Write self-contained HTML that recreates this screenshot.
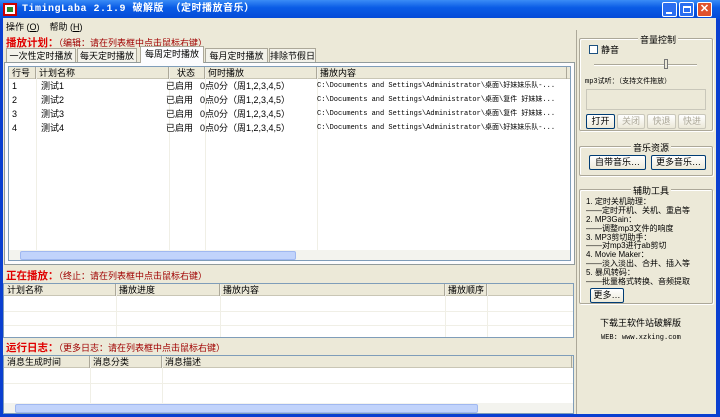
<!DOCTYPE html><html><head><meta charset="utf-8"><style>
*{margin:0;padding:0;box-sizing:border-box}
body{width:720px;height:417px;overflow:hidden;background:#0a3fd0;font-family:"Liberation Sans","Noto Sans CJK SC",sans-serif;font-size:9px;color:#000;position:relative}
.a{position:absolute}
.win{left:3px;top:18px;width:713px;height:396px;background:#ece9d8}
.title{left:0;top:0;width:720px;height:19px;background:linear-gradient(#3a8cf6,#0a5ce6 40%,#0449d6);color:#fff;font:bold 10px "Liberation Mono","Noto Sans CJK SC",monospace;line-height:19px;padding-left:22px;letter-spacing:0.5px}
.tb{top:2px;width:15px;height:15px;border:1px solid #fff;border-radius:2px;background:#2a6ef0}
.red{color:#e00000;font-weight:bold;font-size:10.5px}
.dred{color:#a00000;font-size:9px;font-weight:normal}
.list{background:#fff;border:1px solid #7f9db9}
.hdr{background:#ece9d8;height:12px;border-bottom:1px solid #c9c6b5;white-space:nowrap}
.hdr span{position:absolute;top:0;height:12px;border-right:1px solid #aca899;padding-left:3px;line-height:12px}
.row{position:absolute;height:14px;line-height:14px;white-space:nowrap}
.row span{position:absolute}
.mono{font-family:"Liberation Mono","Noto Sans CJK SC",monospace;font-size:7px}
.vl{position:absolute;top:0;bottom:0;width:1px;background:#f0efe6}
.grp{border:1px solid #aca899;border-radius:2px;box-shadow:inset 1px 1px #fff,1px 1px #fff}
.gt{background:#ece9d8;padding:0 2px;top:-6px;font-size:9px}
.btn{border:1px solid #003c74;border-radius:2px;background:linear-gradient(#fff,#ece9d8);text-align:center;line-height:13px;height:15px}
.dis{color:#aca899;border-color:#c9c7ba}
.hs{height:11px;background:#f3f3ee}
.tab{top:48px;height:14px;line-height:14px;border:1px solid #aca899;border-bottom:none;background:#f3f2ea;text-align:center}
.tl div{height:8.9px;line-height:8.9px;font-size:8px;white-space:nowrap}
</style></head><body>
<div class="a title">TimingLaba 2.1.9 破解版 （定时播放音乐）</div>
<div class="a" style="left:3px;top:3px;width:14px;height:13px;background:#fff;border:2px solid #c00"><div style="margin:2px;width:6px;height:5px;background:#2a8a2a"></div></div>
<div class="a tb" style="left:662px"><div style="position:absolute;left:3px;bottom:2px;width:6px;height:2px;background:#fff"></div></div>
<div class="a tb" style="left:679px"><div style="position:absolute;left:3px;top:3px;width:8px;height:7px;border:1px solid #fff;border-top-width:2px"></div></div>
<div class="a tb" style="left:697px;background:#e0522c;color:#fff;font-weight:bold;font-size:11px;text-align:center;line-height:13px">✕</div>
<div class="a win"></div>
<div class="a" style="left:6px;top:20px;font-size:9px">操作 (<u>O</u>)&nbsp;&nbsp;&nbsp;&nbsp;帮助 (<u>H</u>)</div>
<div class="a red" style="left:6px;top:35px">播放计划：<span class="dred">（编辑：请在列表框中点击鼠标右键）</span></div>
<div class="a tab" style="left:6px;width:70px">一次性定时播放</div>
<div class="a tab" style="left:77px;width:60px">每天定时播放</div>
<div class="a tab" style="left:140px;width:64px;top:46px;height:17px;background:#fcfcfe;z-index:2">每周定时播放</div>
<div class="a tab" style="left:205px;width:63px">每月定时播放</div>
<div class="a tab" style="left:269px;width:47px">排除节假日</div>
<div class="a" style="left:4px;top:62px;width:571px;height:203px;border:1px solid #919b9c;background:#fcfcfe"></div>
<div class="a list" style="left:8px;top:66px;width:563px;height:195px;overflow:hidden">
<div class="hdr a" style="left:0;top:0;width:563px">
<span style="left:0;width:27px">行号</span><span style="left:27px;width:133px">计划名称</span><span style="left:160px;width:36px;padding-left:8px">状态</span><span style="left:196px;width:112px">何时播放</span><span style="left:308px;width:250px">播放内容</span></div>
<div class="vl" style="left:27px"></div><div class="vl" style="left:160px"></div><div class="vl" style="left:196px"></div><div class="vl" style="left:308px"></div>
<div class="row" style="top:12px;width:563px"><span style="left:3px">1</span><span style="left:32px">测试1</span><span style="left:157px">已启用</span><span style="left:191px">0点0分（周1,2,3,4,5）</span><span class="mono" style="left:308px">C:\Documents and Settings\Administrator\桌面\好妹妹乐队-...</span></div>
<div class="row" style="top:26px;width:563px"><span style="left:3px">2</span><span style="left:32px">测试2</span><span style="left:157px">已启用</span><span style="left:191px">0点0分（周1,2,3,4,5）</span><span class="mono" style="left:308px">C:\Documents and Settings\Administrator\桌面\复件 好妹妹...</span></div>
<div class="row" style="top:40px;width:563px"><span style="left:3px">3</span><span style="left:32px">测试3</span><span style="left:157px">已启用</span><span style="left:191px">0点0分（周1,2,3,4,5）</span><span class="mono" style="left:308px">C:\Documents and Settings\Administrator\桌面\复件 好妹妹...</span></div>
<div class="row" style="top:54px;width:563px"><span style="left:3px">4</span><span style="left:32px">测试4</span><span style="left:157px">已启用</span><span style="left:191px">0点0分（周1,2,3,4,5）</span><span class="mono" style="left:308px">C:\Documents and Settings\Administrator\桌面\好妹妹乐队-...</span></div>
<div class="a hs" style="left:0;top:183px;width:563px"><div class="a" style="left:11px;top:1px;width:276px;height:9px;background:#c1d3fb;border:1px solid #a0b8f0;border-radius:2px"></div></div>
</div>
<div class="a" style="left:576px;top:30px;width:1px;height:384px;background:#aca899"></div>
<div class="a grp" style="left:579px;top:38px;width:134px;height:93px"><div class="a gt" style="left:58px">音量控制</div>
<div class="a" style="left:9px;top:6px;width:9px;height:9px;border:1px solid #1c5180;background:#fff"></div><div class="a" style="left:21px;top:4px">静音</div>
<div class="a" style="left:14px;top:25px;width:103px;height:2px;border-top:1px solid #aca899;border-bottom:1px solid #fff"></div>
<div class="a" style="left:84px;top:20px;width:4px;height:10px;background:#ece9d8;border:1px solid #777"></div>
<div class="a mono" style="left:5px;top:37px">mp3试听：（支持文件拖放）</div>
<div class="a" style="left:6px;top:50px;width:120px;height:21px;border:1px solid #c9c7ba;background:#ece9d8"></div>
<div class="a btn" style="left:6px;top:75px;width:29px;font-size:9px">打开</div>
<div class="a btn dis" style="left:37px;top:75px;width:28px">关闭</div>
<div class="a btn dis" style="left:67px;top:75px;width:29px">快退</div>
<div class="a btn dis" style="left:98px;top:75px;width:28px">快进</div></div>
<div class="a grp" style="left:579px;top:146px;width:134px;height:30px"><div class="a gt" style="left:51px">音乐资源</div>
<div class="a btn" style="left:9px;top:8px;width:57px">自带音乐…</div><div class="a btn" style="left:71px;top:8px;width:55px">更多音乐…</div></div>
<div class="a grp" style="left:579px;top:189px;width:134px;height:115px"><div class="a gt" style="left:51px">辅助工具</div>
<div class="a tl" style="left:6px;top:8px"><div>1. 定时关机助理：</div><div>——定时开机、关机、重启等</div><div>2. MP3Gain：</div><div>——调整mp3文件的响度</div><div>3. MP3剪切助手：</div><div>——对mp3进行ab剪切</div><div>4. Movie Maker：</div><div>——淡入淡出、合并、插入等</div><div>5. 暴风转码：</div><div>——批量格式转换、音频提取</div></div>
<div class="a btn" style="left:10px;top:98px;width:34px">更多…</div></div>
<div class="a" style="left:600px;top:316px">下载王软件站破解版</div>
<div class="a mono" style="left:601px;top:334px;font-size:7px">WEB: www.xzking.com</div>
<div class="a red" style="left:6px;top:268px">正在播放：<span class="dred">（终止：请在列表框中点击鼠标右键）</span></div>
<div class="a list" style="left:3px;top:283px;width:571px;height:55px;overflow:hidden">
<div class="hdr a" style="left:0;top:0;width:571px"><span style="left:0;width:112px">计划名称</span><span style="left:112px;width:104px">播放进度</span><span style="left:216px;width:225px">播放内容</span><span style="left:441px;width:42px">播放顺序</span></div>
<div class="vl" style="left:112px"></div><div class="vl" style="left:216px"></div><div class="vl" style="left:441px"></div><div class="vl" style="left:483px"></div>
<div class="a" style="left:0;top:27px;width:571px;height:1px;background:#f0efe6"></div><div class="a" style="left:0;top:41px;width:571px;height:1px;background:#f0efe6"></div></div>
<div class="a red" style="left:6px;top:340px">运行日志：<span class="dred">（更多日志：请在列表框中点击鼠标右键）</span></div>
<div class="a list" style="left:3px;top:355px;width:571px;height:59px;overflow:hidden">
<div class="hdr a" style="left:0;top:0;width:571px"><span style="left:0;width:86px">消息生成时间</span><span style="left:86px;width:72px">消息分类</span><span style="left:158px;width:410px">消息描述</span></div>
<div class="vl" style="left:86px"></div><div class="vl" style="left:158px"></div>
<div class="a" style="left:0;top:27px;width:571px;height:1px;background:#f0efe6"></div>
<div class="a hs" style="left:0;top:47px;width:571px"><div class="a" style="left:11px;top:1px;width:463px;height:9px;background:#c1d3fb;border:1px solid #a0b8f0;border-radius:2px"></div></div></div>
</body></html>
